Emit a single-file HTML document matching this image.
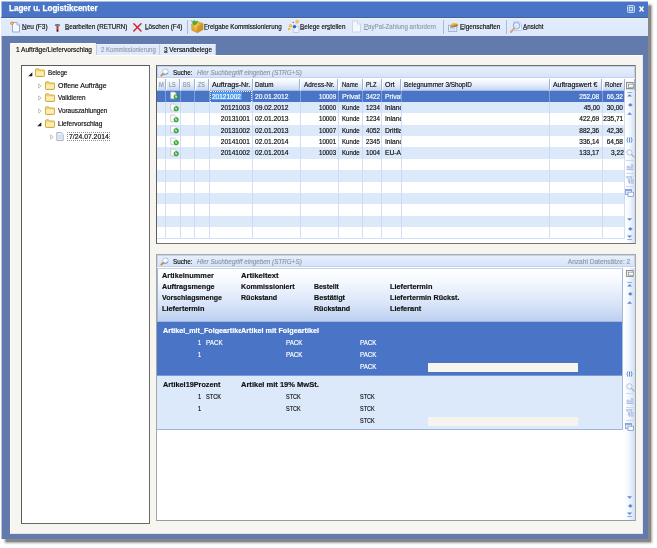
<!DOCTYPE html>
<html lang="de">
<head>
<meta charset="utf-8">
<title>Lager u. Logistikcenter</title>
<style>
html,body{margin:0;padding:0;background:#fff;}
body{width:657px;height:548px;position:relative;overflow:hidden;font-family:"Liberation Sans",sans-serif;font-size:7.3px;color:#0c0c0c;line-height:9px;}
.a{position:absolute;}
.t{position:absolute;white-space:nowrap;line-height:9px;-webkit-text-stroke:0.18px currentColor;}
#root{position:absolute;left:0;top:0;width:657px;height:548px;will-change:transform;filter:blur(0.35px);}
.g{color:#929baa;}
.w{color:#fff;}
u{text-decoration:underline;text-underline-offset:0.2px;text-decoration-thickness:0.7px;text-decoration-color:rgba(20,20,20,0.6);}
.g u{text-decoration-color:#929baa;}
svg{position:absolute;overflow:visible;}
#shadow{left:6px;top:6px;width:645px;height:536px;background:#878787;box-shadow:0 0 2.5px 1.2px #8b8b8b;}
#win{left:1px;top:1px;width:646px;height:537px;background:#627aac;border-left:1px solid #b3bfd8;border-top:1px solid #a7bbe3;}
#title{left:1px;top:2px;width:646px;height:15px;background:#4a74c6;border-left:1px solid #a7bbe3;}
#tline{left:1px;top:17px;width:647px;height:1px;background:#45609a;}
#tool{left:1px;top:18px;width:647px;height:18px;background:linear-gradient(#f1f6fe 0,#e1ecfc 1.5px,#dde9fb 100%);}
#content{left:10px;top:55px;width:633px;height:479px;background:#f6f5f0;border:1px solid #fdfdfc;border-right-color:#e4e8f0;border-bottom-color:#dfe3ec;box-sizing:border-box;}
.sep{position:absolute;top:20px;width:1px;height:14px;background:#a9b9d6;}
.panel{position:absolute;background:#fff;border:1px solid #9a9a9a;box-sizing:border-box;}
.search{position:absolute;background:linear-gradient(#e6effc,#d6e4f9);border:1px solid #c3d3ee;box-sizing:border-box;}
.hdr{position:absolute;background:linear-gradient(#ffffff,#e6eefb 50%,#c5d8f5);border-right:1px solid #9fb2d6;border-left:1px solid #fff;box-sizing:border-box;}
.strip{position:absolute;background:linear-gradient(90deg,#ffffff,#f4f8fe 45%,#cfdff7);}
</style>
</head>
<body>
<div id="root">
<div class="a" id="shadow"></div>
<div class="a" id="win"></div>
<div class="a" id="title"></div>
<div class="a" id="tline"></div>
<div class="a" id="tool"></div>
<div class="t w" style="top:4.35px;font-size:8.8px;transform:scaleX(0.915);left:9.4px;transform-origin:0 0;font-weight:bold;-webkit-text-stroke:0.25px #fff;">Lager u. Logistikcenter</div>
<svg style="left:627px;top:5px" width="24" height="10" viewBox="0 0 24 10"><rect x="0.5" y="0.5" width="7" height="7" rx="1" fill="#6f92d6" stroke="#c9d8f2" stroke-width="1"/><rect x="2.5" y="2.5" width="3" height="3" fill="none" stroke="#dfe8f8" stroke-width="0.8"/><path d="M12.5 1.5 L16.5 6.5 M16.5 1.5 L12.5 6.5" stroke="#fff" stroke-width="1.4" fill="none"/></svg>
<svg style="left:10px;top:21px" width="11" height="12" viewBox="0 0 11 12"><path d="M2.5 1.5 H7 L9.5 4 V11 H2.5 Z" fill="#f4f8ff" stroke="#8fa3c8" stroke-width="0.9"/><path d="M7 1.5 V4 H9.5" fill="#dbe6f8" stroke="#8fa3c8" stroke-width="0.7"/><circle cx="2" cy="2.2" r="1.7" fill="#f08a1c"/><circle cx="2" cy="2.2" r="0.7" fill="#ffd98a"/></svg>
<div class="t " style="top:21.76px;font-size:8px;transform:scaleX(0.811);left:21.9px;transform-origin:0 0;"><u>N</u>eu (F3)</div>
<svg style="left:54.3px;top:22.6px" width="7" height="9.6" viewBox="0 0 9 12"><path d="M1 2 Q4 0.3 8 2 L7.5 3.6 Q4.5 2.6 1.5 3.6 Z" fill="#5d6470"/><rect x="3.2" y="3" width="2.6" height="8" rx="1" fill="#b5442c"/><rect x="3.6" y="8.5" width="1.8" height="2.3" fill="#3a2a26"/></svg>
<div class="t " style="top:21.76px;font-size:8px;transform:scaleX(0.784);left:64.8px;transform-origin:0 0;"><u>B</u>earbeiten (RETURN)</div>
<svg style="left:133px;top:23px" width="9" height="9" viewBox="0 0 9 9"><path d="M0.8 0.8 L8 8 M8 0.8 L0.8 8" stroke="#d3262b" stroke-width="1.5" fill="none" stroke-linecap="round"/></svg>
<div class="t " style="top:21.76px;font-size:8px;transform:scaleX(0.791);left:144.7px;transform-origin:0 0;"><u>L</u>öschen (F4)</div>
<div class="sep" style="left:187px"></div>
<svg style="left:190px;top:19px" width="14" height="15" viewBox="0 0 14 15"><defs><radialGradient id="bx" cx="0.4" cy="0.35" r="0.75"><stop offset="0" stop-color="#f6c453"/><stop offset="0.7" stop-color="#e0a22c"/><stop offset="1" stop-color="#b97f1c"/></radialGradient></defs><path d="M1.6 5 L7.2 2.4 L13 4.6 L13 10.6 L7.4 13.8 L1.8 11.2 Z" fill="url(#bx)" stroke="#c08a25" stroke-width="0.5" stroke-linejoin="round"/><path d="M7.3 7.2 L13 4.8 V10.6 L7.4 13.8 Z" fill="#c88f22" opacity="0.75"/><path d="M0.3 1.2 L3 2.6 L4.2 0.8 L5.4 2.6 L8 1.4 L6.6 5.2 L3.6 6.6 L2.4 3.6 Z" fill="#43b02f"/></svg>
<div class="t " style="top:21.76px;font-size:8px;transform:scaleX(0.779);left:204px;transform-origin:0 0;"><u>F</u>reigabe Kommissionierung</div>
<svg style="left:287px;top:19px" width="14" height="15" viewBox="0 0 14 15"><rect x="6.2" y="7.8" width="5.8" height="5.8" fill="#eef1fb" stroke="#b9b6dc" stroke-width="0.7"/><path d="M3.5 6.8 L7.5 7.7 L10.2 2.5 M6.3 3.4 L7.5 7.7" stroke="#c9d2e6" stroke-width="0.5" fill="none"/><circle cx="10.2" cy="2.6" r="1.8" fill="#f0b429"/><circle cx="10" cy="2.3" r="0.8" fill="#fbe08e"/><circle cx="3.5" cy="6.8" r="1.7" fill="#f0b429"/><circle cx="3.3" cy="6.5" r="0.7" fill="#fbe08e"/><circle cx="2" cy="10.1" r="1.2" fill="#f0b429"/><circle cx="7.5" cy="7.7" r="1.6" fill="#2f5fd0"/><circle cx="6.3" cy="3.4" r="0.7" fill="#4f74c8"/></svg>
<div class="t " style="top:21.76px;font-size:8px;transform:scaleX(0.791);left:299.6px;transform-origin:0 0;"><u>B</u>elege er<u>s</u>tellen</div>
<svg style="left:351px;top:20px" width="11" height="13" viewBox="0 0 11 13"><path d="M1.5 1 H6.5 L9.5 4 V12 H1.5 Z" fill="#f3f7fe" stroke="#c3cfe4" stroke-width="0.8"/><path d="M6.5 1 V4 H9.5" fill="none" stroke="#c3cfe4" stroke-width="0.7"/></svg>
<div class="t g" style="top:21.76px;font-size:8px;transform:scaleX(0.770);left:363.5px;transform-origin:0 0;"><u>P</u>ayPal-Zahlung anfordern</div>
<div class="sep" style="left:443px"></div>
<svg style="left:448px;top:20px" width="12" height="13" viewBox="0 0 12 13"><rect x="0.4" y="5.2" width="8.4" height="6.2" fill="#f2f6fe" stroke="#8fa6d8" stroke-width="0.8"/><path d="M1.6 8.4 H7.6 M1.6 10 H7.6" stroke="#b4c4e6" stroke-width="0.8"/><path d="M2.6 6.2 Q3.2 3.6 6 3 Q8.6 2.6 10.4 4.6 Q8.4 6.6 5.6 6.6 Z" fill="#d99a1a"/><path d="M4 4.6 Q6 3.2 8.4 3.8" stroke="#f6d26a" stroke-width="0.8" fill="none"/><path d="M2 6.9 Q5 7.8 9.6 5.6" stroke="#5a3a14" stroke-width="0.8" fill="none"/></svg>
<div class="t " style="top:21.76px;font-size:8px;transform:scaleX(0.797);left:460.4px;transform-origin:0 0;"><u>E</u>igenschaften</div>
<div class="sep" style="left:506px"></div>
<svg style="left:509px;top:19px" width="14" height="15" viewBox="0 0 14 15"><path d="M4.8 2.8 H10 L12.4 5 V11.6 H4.8 Z" fill="#f4f8ff" stroke="#a7b9dc" stroke-width="0.7"/><circle cx="7.6" cy="6.8" r="3.3" fill="#d5e6fb" fill-opacity="0.9" stroke="#86a3d8" stroke-width="0.9"/><path d="M6.4 5.6 Q7.6 4.6 8.8 5.6" stroke="#fff" stroke-width="0.7" fill="none"/><path d="M5 9.6 L1.8 13" stroke="#d9a47c" stroke-width="2" stroke-linecap="round"/></svg>
<div class="t " style="top:21.76px;font-size:8px;transform:scaleX(0.781);left:523px;transform-origin:0 0;"><u>A</u>nsicht</div>
<div class="a" style="left:96px;top:44px;width:63.5px;height:11px;background:#dfeafb;border-left:1px solid #b9cbea;border-right:1px solid #b9cbea;border-top:1px solid #e9f1fd;box-sizing:border-box;"></div>
<div class="a" style="left:159.5px;top:44px;width:56px;height:11px;background:#dfeafb;border-right:1px solid #b9cbea;border-top:1px solid #e9f1fd;box-sizing:border-box;"></div>
<div class="t g" style="top:45.01px;font-size:7.6px;transform:scaleX(0.796);left:101px;transform-origin:0 0;">2 Kommissionierung</div>
<div class="t " style="top:45.01px;font-size:7.6px;transform:scaleX(0.841);left:164px;transform-origin:0 0;"><u>3</u> Versandbelege</div>
<div class="a" id="content"></div>
<div class="a" style="left:10px;top:43px;width:86px;height:14px;background:#f6f5f0;border-radius:1px 1px 0 0;border-top:1px solid #fdfdfb;box-sizing:border-box;"></div>
<div class="t " style="top:44.51px;font-size:7.6px;transform:scaleX(0.861);left:15.9px;transform-origin:0 0;">1 Aufträge/Liefervorschlag</div>
<div class="panel" style="left:21px;top:65px;width:129px;height:459px;border-color:#5a5a5a #6a6a6a #6a6a6a #5a5a5a"></div>
<svg style="left:27.6px;top:71.6px" width="4.6" height="4.6" viewBox="0 0 5 5"><path d="M4.7 0.2 V4.7 H0.2 Z" fill="#1e1e1e"/></svg>
<svg style="left:34.5px;top:68.3px" width="10" height="9" viewBox="0 0 11 9" preserveAspectRatio="none"><path d="M0.5 1.8 Q0.5 0.8 1.5 0.8 H4 L5 2 H9.5 Q10.5 2 10.5 3 V7.5 Q10.5 8.5 9.5 8.5 H1.5 Q0.5 8.5 0.5 7.5 Z" fill="#f4d672" stroke="#c49a28" stroke-width="0.8"/><path d="M1.2 3.4 H9.8 V7.6 H1.2 Z" fill="#fbeeb2"/></svg>
<div class="t " style="top:68.41px;font-size:7.6px;transform:scaleX(0.816);left:47.6px;transform-origin:0 0;">Belege</div>
<svg style="left:38px;top:82.7px" width="4" height="6" viewBox="0 0 5 7"><path d="M0.8 0.8 L4 3.5 L0.8 6.2 Z" fill="#fff" stroke="#a6a6a6" stroke-width="0.8"/></svg>
<svg style="left:45.2px;top:81.10000000000001px" width="10" height="9" viewBox="0 0 11 9" preserveAspectRatio="none"><path d="M0.5 1.8 Q0.5 0.8 1.5 0.8 H4 L5 2 H9.5 Q10.5 2 10.5 3 V7.5 Q10.5 8.5 9.5 8.5 H1.5 Q0.5 8.5 0.5 7.5 Z" fill="#f4d672" stroke="#c49a28" stroke-width="0.8"/><path d="M1.2 3.4 H9.8 V7.6 H1.2 Z" fill="#fbeeb2"/></svg>
<div class="t " style="top:81.11px;font-size:7.6px;transform:scaleX(0.915);left:57.7px;transform-origin:0 0;">Offene Aufträge</div>
<svg style="left:38px;top:94.7px" width="4" height="6" viewBox="0 0 5 7"><path d="M0.8 0.8 L4 3.5 L0.8 6.2 Z" fill="#fff" stroke="#a6a6a6" stroke-width="0.8"/></svg>
<svg style="left:45.2px;top:93.10000000000001px" width="10" height="9" viewBox="0 0 11 9" preserveAspectRatio="none"><path d="M0.5 1.8 Q0.5 0.8 1.5 0.8 H4 L5 2 H9.5 Q10.5 2 10.5 3 V7.5 Q10.5 8.5 9.5 8.5 H1.5 Q0.5 8.5 0.5 7.5 Z" fill="#f4d672" stroke="#c49a28" stroke-width="0.8"/><path d="M1.2 3.4 H9.8 V7.6 H1.2 Z" fill="#fbeeb2"/></svg>
<div class="t " style="top:93.11px;font-size:7.6px;transform:scaleX(0.830);left:57.7px;transform-origin:0 0;">Validieren</div>
<svg style="left:38px;top:108px" width="4" height="6" viewBox="0 0 5 7"><path d="M0.8 0.8 L4 3.5 L0.8 6.2 Z" fill="#fff" stroke="#a6a6a6" stroke-width="0.8"/></svg>
<svg style="left:45.2px;top:106.4px" width="10" height="9" viewBox="0 0 11 9" preserveAspectRatio="none"><path d="M0.5 1.8 Q0.5 0.8 1.5 0.8 H4 L5 2 H9.5 Q10.5 2 10.5 3 V7.5 Q10.5 8.5 9.5 8.5 H1.5 Q0.5 8.5 0.5 7.5 Z" fill="#f4d672" stroke="#c49a28" stroke-width="0.8"/><path d="M1.2 3.4 H9.8 V7.6 H1.2 Z" fill="#fbeeb2"/></svg>
<div class="t " style="top:106.41px;font-size:7.6px;transform:scaleX(0.841);left:57.7px;transform-origin:0 0;">Vorauszahlungen</div>
<svg style="left:37.3px;top:122px" width="4.6" height="4.6" viewBox="0 0 5 5"><path d="M4.7 0.2 V4.7 H0.2 Z" fill="#1e1e1e"/></svg>
<svg style="left:45.2px;top:119px" width="10" height="9" viewBox="0 0 11 9" preserveAspectRatio="none"><path d="M0.5 1.8 Q0.5 0.8 1.5 0.8 H4 L5 2 H9.5 Q10.5 2 10.5 3 V7.5 Q10.5 8.5 9.5 8.5 H1.5 Q0.5 8.5 0.5 7.5 Z" fill="#f4d672" stroke="#c49a28" stroke-width="0.8"/><path d="M1.2 3.4 H9.8 V7.6 H1.2 Z" fill="#fbeeb2"/></svg>
<div class="t " style="top:119.01px;font-size:7.6px;transform:scaleX(0.861);left:57.7px;transform-origin:0 0;">Liefervorschlag</div>
<svg style="left:49.5px;top:133.5px" width="4" height="6" viewBox="0 0 5 7"><path d="M0.8 0.8 L4 3.5 L0.8 6.2 Z" fill="#fff" stroke="#a6a6a6" stroke-width="0.8"/></svg>
<svg style="left:56px;top:132px" width="8" height="9" viewBox="0 0 8 10" preserveAspectRatio="none"><path d="M0.8 0.6 H5 L7.2 2.8 V9.4 H0.8 Z" fill="#eef3fc" stroke="#8c9dbd" stroke-width="0.8"/><path d="M2 4 H6 M2 5.5 H6 M2 7 H6" stroke="#b9c6df" stroke-width="0.6"/></svg>
<div class="a" style="left:66.7px;top:131.5px;width:43px;height:9.3px;background:transparent;border:1px dotted #8a8a8a;box-sizing:border-box;"></div>
<div class="t " style="top:131.61px;font-size:7.6px;transform:scaleX(0.897);left:68.6px;transform-origin:0 0;">7/24.07.2014</div>
<div class="panel" style="left:156px;top:65px;width:480px;height:179px;border-color:#707070 #9a9a9a #727272 #5e5e5e"></div>
<div class="search" style="left:157px;top:66px;width:478px;height:12.4px"></div>
<svg style="left:160px;top:68px" width="9" height="9" viewBox="0 0 9 9"><circle cx="5.5" cy="3.7" r="2.8" fill="#eefaff" stroke="#9fb6d8" stroke-width="0.8"/><path d="M3.6 5.9 Q5.8 7.2 7.9 5" stroke="#5f7fb4" stroke-width="0.8" fill="none"/><circle cx="5" cy="3.1" r="1.3" fill="#ffffff"/><path d="M3.1 6 L1.3 7.7" stroke="#c98845" stroke-width="1.8" stroke-linecap="round"/></svg>
<div class="t " style="top:67.61px;font-size:7.6px;transform:scaleX(0.824);left:173px;transform-origin:0 0;">Suche:</div>
<div class="t " style="top:67.61px;font-size:7.6px;transform:scaleX(0.835);left:197.4px;transform-origin:0 0;font-style:italic;color:#8f97a6;">Hier Suchbegriff eingeben (STRG+S)</div>
<div class="hdr" style="left:157px;top:79px;width:8.6px;height:11.4px"></div>
<div class="hdr" style="left:165.6px;top:79px;width:14.7px;height:11.4px"></div>
<div class="hdr" style="left:180.3px;top:79px;width:14.6px;height:11.4px"></div>
<div class="hdr" style="left:194.9px;top:79px;width:14.1px;height:11.4px"></div>
<div class="hdr" style="left:209px;top:79px;width:43.9px;height:11.4px"></div>
<div class="hdr" style="left:252.9px;top:79px;width:47.4px;height:11.4px"></div>
<div class="hdr" style="left:300.3px;top:79px;width:38.2px;height:11.4px"></div>
<div class="hdr" style="left:338.5px;top:79px;width:24.3px;height:11.4px"></div>
<div class="hdr" style="left:362.8px;top:79px;width:18.8px;height:11.4px"></div>
<div class="hdr" style="left:381.6px;top:79px;width:19.6px;height:11.4px"></div>
<div class="hdr" style="left:401.2px;top:79px;width:148.4px;height:11.4px"></div>
<div class="hdr" style="left:549.6px;top:79px;width:52.7px;height:11.4px"></div>
<div class="hdr" style="left:602.3px;top:79px;width:22.5px;height:11.4px"></div>
<div class="hdr" style="left:624.8px;top:79px;width:10.2px;height:11.4px"></div>
<div class="a" style="left:157px;top:89.8px;width:478px;height:0.8px;background:#a9bbdc;"></div>
<div class="t " style="top:80.11px;font-size:7.6px;transform:scaleX(0.758);left:159.4px;transform-origin:0 0;color:#8e96a4;">M</div>
<div class="t " style="top:80.11px;font-size:7.6px;transform:scaleX(0.710);left:168.6px;transform-origin:0 0;color:#8e96a4;">LS</div>
<div class="t " style="top:80.11px;font-size:7.6px;transform:scaleX(0.720);left:183.3px;transform-origin:0 0;color:#8e96a4;">BS</div>
<div class="t " style="top:80.11px;font-size:7.6px;transform:scaleX(0.700);left:197.9px;transform-origin:0 0;color:#8e96a4;">ZS</div>
<div class="t " style="top:80.11px;font-size:7.6px;transform:scaleX(0.945);left:212px;transform-origin:0 0;">Auftrags-Nr.</div>
<div class="t " style="top:80.11px;font-size:7.6px;transform:scaleX(0.826);left:255.3px;transform-origin:0 0;">Datum</div>
<div class="t " style="top:80.11px;font-size:7.6px;transform:scaleX(0.855);left:303.5px;transform-origin:0 0;">Adress-Nr.</div>
<div class="t " style="top:80.11px;font-size:7.6px;transform:scaleX(0.789);left:341.6px;transform-origin:0 0;">Name</div>
<div class="t " style="top:80.11px;font-size:7.6px;transform:scaleX(0.753);left:365.5px;transform-origin:0 0;">PLZ</div>
<div class="t " style="top:80.11px;font-size:7.6px;transform:scaleX(0.919);left:384.8px;transform-origin:0 0;">Ort</div>
<div class="t " style="top:80.11px;font-size:7.6px;transform:scaleX(0.838);left:403.5px;transform-origin:0 0;">Belegnummer 3/ShopID</div>
<div class="t " style="top:80.11px;font-size:7.6px;transform:scaleX(0.908);left:552.5px;transform-origin:0 0;">Auftragswert €</div>
<div class="t " style="top:80.11px;font-size:7.6px;transform:scaleX(0.821);left:604.5px;transform-origin:0 0;">Roher</div>
<div class="a" style="left:157px;top:90.5px;width:467.7px;height:11.38px;background:#4a74c6;"></div>
<div class="a" style="left:157px;top:101.88px;width:467.7px;height:11.38px;background:#dce9fb;"></div>
<div class="a" style="left:157px;top:124.64px;width:467.7px;height:11.38px;background:#dce9fb;"></div>
<div class="a" style="left:157px;top:147.4px;width:467.7px;height:11.38px;background:#dce9fb;"></div>
<div class="a" style="left:157px;top:170.16px;width:467.7px;height:11.38px;background:#dce9fb;"></div>
<div class="a" style="left:157px;top:192.92px;width:467.7px;height:11.38px;background:#dce9fb;"></div>
<div class="a" style="left:157px;top:215.68px;width:467.7px;height:11.38px;background:#dce9fb;"></div>
<div class="a" style="left:165.1px;top:90.4px;width:1px;height:148.04px;background:#c9d8f2;opacity:0.85;"></div>
<div class="a" style="left:179.8px;top:90.4px;width:1px;height:148.04px;background:#c9d8f2;opacity:0.85;"></div>
<div class="a" style="left:194.4px;top:90.4px;width:1px;height:148.04px;background:#c9d8f2;opacity:0.85;"></div>
<div class="a" style="left:208.5px;top:90.4px;width:1px;height:148.04px;background:#c9d8f2;opacity:0.85;"></div>
<div class="a" style="left:252.4px;top:90.4px;width:1px;height:148.04px;background:#c9d8f2;opacity:0.85;"></div>
<div class="a" style="left:299.8px;top:90.4px;width:1px;height:148.04px;background:#c9d8f2;opacity:0.85;"></div>
<div class="a" style="left:338px;top:90.4px;width:1px;height:148.04px;background:#c9d8f2;opacity:0.85;"></div>
<div class="a" style="left:362.3px;top:90.4px;width:1px;height:148.04px;background:#c9d8f2;opacity:0.85;"></div>
<div class="a" style="left:381.1px;top:90.4px;width:1px;height:148.04px;background:#c9d8f2;opacity:0.85;"></div>
<div class="a" style="left:400.7px;top:90.4px;width:1px;height:148.04px;background:#c9d8f2;opacity:0.85;"></div>
<div class="a" style="left:549.1px;top:90.4px;width:1px;height:148.04px;background:#c9d8f2;opacity:0.85;"></div>
<div class="a" style="left:601.8px;top:90.4px;width:1px;height:148.04px;background:#c9d8f2;opacity:0.85;"></div>
<div class="a" style="left:624.3px;top:90.4px;width:1px;height:148.04px;background:#c9d8f2;opacity:0.85;"></div>
<div class="a" style="left:165.1px;top:90.5px;width:1px;height:11.38px;background:#7f9fdc;"></div>
<div class="a" style="left:179.8px;top:90.5px;width:1px;height:11.38px;background:#7f9fdc;"></div>
<div class="a" style="left:194.4px;top:90.5px;width:1px;height:11.38px;background:#7f9fdc;"></div>
<div class="a" style="left:208.5px;top:90.5px;width:1px;height:11.38px;background:#7f9fdc;"></div>
<div class="a" style="left:252.4px;top:90.5px;width:1px;height:11.38px;background:#7f9fdc;"></div>
<div class="a" style="left:299.8px;top:90.5px;width:1px;height:11.38px;background:#7f9fdc;"></div>
<div class="a" style="left:338px;top:90.5px;width:1px;height:11.38px;background:#7f9fdc;"></div>
<div class="a" style="left:362.3px;top:90.5px;width:1px;height:11.38px;background:#7f9fdc;"></div>
<div class="a" style="left:381.1px;top:90.5px;width:1px;height:11.38px;background:#7f9fdc;"></div>
<div class="a" style="left:400.7px;top:90.5px;width:1px;height:11.38px;background:#7f9fdc;"></div>
<div class="a" style="left:549.1px;top:90.5px;width:1px;height:11.38px;background:#7f9fdc;"></div>
<div class="a" style="left:601.8px;top:90.5px;width:1px;height:11.38px;background:#7f9fdc;"></div>
<div class="a" style="left:157px;top:238.14px;width:468px;height:0.9px;background:#d3e1f6;"></div>
<div class="strip" style="left:625.2px;top:90.4px;width:9.8px;height:152.6px"></div>
<div class="a" style="left:209.5px;top:90.8px;width:42.5px;height:10.78px;background:transparent;border:1px dotted #e8eefb;border-bottom:none;box-sizing:border-box;"></div>
<div class="a" style="left:211.5px;top:92.1px;width:30px;height:8.38px;background:#4f9bea;"></div>
<svg style="left:169.7px;top:91.3px" width="9" height="10" viewBox="0 0 9 10"><path d="M0.7 1 H4.6 L6.2 2.6 V7.8 H0.7 Z" fill="#fdfefe" stroke="#b4b9c4" stroke-width="0.7"/><circle cx="6.2" cy="5.7" r="2.3" fill="#35b032" stroke="#1f8a22" stroke-width="0.5"/><circle cx="5.7" cy="5" r="0.9" fill="#9be38f" opacity="0.8"/><path d="M5.1 5.6 H7.3 L6.2 7 Z" fill="#f2fff0"/></svg>
<div class="t " style="top:91.5px;font-size:7.6px;transform:scaleX(0.858);left:212px;transform-origin:0 0;color:#fff;">20121002</div>
<div class="t " style="top:91.5px;font-size:7.6px;transform:scaleX(0.881);left:255.3px;transform-origin:0 0;color:#fff;">20.01.2012</div>
<div class="t " style="top:91.5px;font-size:7.6px;transform:scaleX(0.809);right:320.8px;transform-origin:100% 0;color:#fff;">10009</div>
<div class="a" style="left:339px;top:90.5px;width:23.3px;height:11.38px;overflow:hidden">
<div class="t " style="top:1px;font-size:7.6px;transform:scaleX(0.940);left:2.6px;transform-origin:0 0;color:#fff;">Privat K</div>
</div>
<div class="t " style="top:91.5px;font-size:7.6px;transform:scaleX(0.816);right:277.2px;transform-origin:100% 0;color:#fff;">3422</div>
<div class="a" style="left:382.1px;top:90.5px;width:18.6px;height:11.38px;overflow:hidden">
<div class="t " style="top:1px;font-size:7.6px;transform:scaleX(0.888);left:2.7px;transform-origin:0 0;color:#fff;">Privat</div>
</div>
<div class="t " style="top:91.5px;font-size:7.6px;transform:scaleX(0.860);right:57.4px;transform-origin:100% 0;color:#fff;">252,08</div>
<div class="t " style="top:91.5px;font-size:7.6px;transform:scaleX(0.861);right:33.5px;transform-origin:100% 0;color:#fff;">66,32</div>
<svg style="left:169.7px;top:102.68px" width="9" height="10" viewBox="0 0 9 10"><path d="M0.7 1 H4.6 L6.2 2.6 V7.8 H0.7 Z" fill="#fdfefe" stroke="#b4b9c4" stroke-width="0.7"/><circle cx="6.2" cy="5.7" r="2.3" fill="#35b032" stroke="#1f8a22" stroke-width="0.5"/><circle cx="5.7" cy="5" r="0.9" fill="#9be38f" opacity="0.8"/><path d="M5.1 5.6 H7.3 L6.2 7 Z" fill="#f2fff0"/></svg>
<div class="t " style="top:102.88px;font-size:7.6px;transform:scaleX(0.858);right:407.3px;transform-origin:100% 0;">20121003</div>
<div class="t " style="top:102.88px;font-size:7.6px;transform:scaleX(0.881);left:255.3px;transform-origin:0 0;">09.02.2012</div>
<div class="t " style="top:102.88px;font-size:7.6px;transform:scaleX(0.809);right:320.8px;transform-origin:100% 0;">10000</div>
<div class="a" style="left:339px;top:101.88px;width:23.3px;height:11.38px;overflow:hidden">
<div class="t " style="top:1px;font-size:7.6px;transform:scaleX(0.805);left:2.6px;transform-origin:0 0;">Kunde</div>
</div>
<div class="t " style="top:102.88px;font-size:7.6px;transform:scaleX(0.816);right:277.2px;transform-origin:100% 0;">1234</div>
<div class="a" style="left:382.1px;top:101.88px;width:18.6px;height:11.38px;overflow:hidden">
<div class="t " style="top:1px;font-size:7.6px;transform:scaleX(0.888);left:2.7px;transform-origin:0 0;">Inland</div>
</div>
<div class="t " style="top:102.88px;font-size:7.6px;transform:scaleX(0.861);right:57.4px;transform-origin:100% 0;">45,00</div>
<div class="t " style="top:102.88px;font-size:7.6px;transform:scaleX(0.861);right:33.5px;transform-origin:100% 0;">30,00</div>
<svg style="left:169.7px;top:114.06px" width="9" height="10" viewBox="0 0 9 10"><path d="M0.7 1 H4.6 L6.2 2.6 V7.8 H0.7 Z" fill="#fdfefe" stroke="#b4b9c4" stroke-width="0.7"/><circle cx="6.2" cy="5.7" r="2.3" fill="#35b032" stroke="#1f8a22" stroke-width="0.5"/><circle cx="5.7" cy="5" r="0.9" fill="#9be38f" opacity="0.8"/><path d="M5.1 5.6 H7.3 L6.2 7 Z" fill="#f2fff0"/></svg>
<div class="t " style="top:114.26px;font-size:7.6px;transform:scaleX(0.858);right:407.3px;transform-origin:100% 0;">20131001</div>
<div class="t " style="top:114.26px;font-size:7.6px;transform:scaleX(0.881);left:255.3px;transform-origin:0 0;">02.01.2013</div>
<div class="t " style="top:114.26px;font-size:7.6px;transform:scaleX(0.809);right:320.8px;transform-origin:100% 0;">10000</div>
<div class="a" style="left:339px;top:113.26px;width:23.3px;height:11.38px;overflow:hidden">
<div class="t " style="top:1px;font-size:7.6px;transform:scaleX(0.805);left:2.6px;transform-origin:0 0;">Kunde</div>
</div>
<div class="t " style="top:114.26px;font-size:7.6px;transform:scaleX(0.816);right:277.2px;transform-origin:100% 0;">1234</div>
<div class="a" style="left:382.1px;top:113.26px;width:18.6px;height:11.38px;overflow:hidden">
<div class="t " style="top:1px;font-size:7.6px;transform:scaleX(0.888);left:2.7px;transform-origin:0 0;">Inland</div>
</div>
<div class="t " style="top:114.26px;font-size:7.6px;transform:scaleX(0.860);right:57.4px;transform-origin:100% 0;">422,69</div>
<div class="t " style="top:114.26px;font-size:7.6px;transform:scaleX(0.860);right:33.5px;transform-origin:100% 0;">235,71</div>
<svg style="left:169.7px;top:125.44px" width="9" height="10" viewBox="0 0 9 10"><path d="M0.7 1 H4.6 L6.2 2.6 V7.8 H0.7 Z" fill="#fdfefe" stroke="#b4b9c4" stroke-width="0.7"/><circle cx="6.2" cy="5.7" r="2.3" fill="#35b032" stroke="#1f8a22" stroke-width="0.5"/><circle cx="5.7" cy="5" r="0.9" fill="#9be38f" opacity="0.8"/><path d="M5.1 5.6 H7.3 L6.2 7 Z" fill="#f2fff0"/></svg>
<div class="t " style="top:125.64px;font-size:7.6px;transform:scaleX(0.858);right:407.3px;transform-origin:100% 0;">20131002</div>
<div class="t " style="top:125.64px;font-size:7.6px;transform:scaleX(0.881);left:255.3px;transform-origin:0 0;">02.01.2013</div>
<div class="t " style="top:125.64px;font-size:7.6px;transform:scaleX(0.809);right:320.8px;transform-origin:100% 0;">10007</div>
<div class="a" style="left:339px;top:124.64px;width:23.3px;height:11.38px;overflow:hidden">
<div class="t " style="top:1px;font-size:7.6px;transform:scaleX(0.805);left:2.6px;transform-origin:0 0;">Kunde</div>
</div>
<div class="t " style="top:125.64px;font-size:7.6px;transform:scaleX(0.816);right:277.2px;transform-origin:100% 0;">4052</div>
<div class="a" style="left:382.1px;top:124.64px;width:18.6px;height:11.38px;overflow:hidden">
<div class="t " style="top:1px;font-size:7.6px;transform:scaleX(0.888);left:2.7px;transform-origin:0 0;">Drittland</div>
</div>
<div class="t " style="top:125.64px;font-size:7.6px;transform:scaleX(0.860);right:57.4px;transform-origin:100% 0;">882,36</div>
<div class="t " style="top:125.64px;font-size:7.6px;transform:scaleX(0.861);right:33.5px;transform-origin:100% 0;">42,36</div>
<svg style="left:169.7px;top:136.82px" width="9" height="10" viewBox="0 0 9 10"><path d="M0.7 1 H4.6 L6.2 2.6 V7.8 H0.7 Z" fill="#fdfefe" stroke="#b4b9c4" stroke-width="0.7"/><circle cx="6.2" cy="5.7" r="2.3" fill="#35b032" stroke="#1f8a22" stroke-width="0.5"/><circle cx="5.7" cy="5" r="0.9" fill="#9be38f" opacity="0.8"/><path d="M5.1 5.6 H7.3 L6.2 7 Z" fill="#f2fff0"/></svg>
<div class="t " style="top:137.02px;font-size:7.6px;transform:scaleX(0.858);right:407.3px;transform-origin:100% 0;">20141001</div>
<div class="t " style="top:137.02px;font-size:7.6px;transform:scaleX(0.881);left:255.3px;transform-origin:0 0;">02.01.2014</div>
<div class="t " style="top:137.02px;font-size:7.6px;transform:scaleX(0.809);right:320.8px;transform-origin:100% 0;">10001</div>
<div class="a" style="left:339px;top:136.02px;width:23.3px;height:11.38px;overflow:hidden">
<div class="t " style="top:1px;font-size:7.6px;transform:scaleX(0.805);left:2.6px;transform-origin:0 0;">Kunde</div>
</div>
<div class="t " style="top:137.02px;font-size:7.6px;transform:scaleX(0.816);right:277.2px;transform-origin:100% 0;">2345</div>
<div class="a" style="left:382.1px;top:136.02px;width:18.6px;height:11.38px;overflow:hidden">
<div class="t " style="top:1px;font-size:7.6px;transform:scaleX(0.888);left:2.7px;transform-origin:0 0;">Inland</div>
</div>
<div class="t " style="top:137.02px;font-size:7.6px;transform:scaleX(0.860);right:57.4px;transform-origin:100% 0;">336,14</div>
<div class="t " style="top:137.02px;font-size:7.6px;transform:scaleX(0.861);right:33.5px;transform-origin:100% 0;">64,58</div>
<svg style="left:169.7px;top:148.2px" width="9" height="10" viewBox="0 0 9 10"><path d="M0.7 1 H4.6 L6.2 2.6 V7.8 H0.7 Z" fill="#fdfefe" stroke="#b4b9c4" stroke-width="0.7"/><circle cx="6.2" cy="5.7" r="2.3" fill="#35b032" stroke="#1f8a22" stroke-width="0.5"/><circle cx="5.7" cy="5" r="0.9" fill="#9be38f" opacity="0.8"/><path d="M5.1 5.6 H7.3 L6.2 7 Z" fill="#f2fff0"/></svg>
<div class="t " style="top:148.4px;font-size:7.6px;transform:scaleX(0.858);right:407.3px;transform-origin:100% 0;">20141002</div>
<div class="t " style="top:148.4px;font-size:7.6px;transform:scaleX(0.881);left:255.3px;transform-origin:0 0;">02.01.2014</div>
<div class="t " style="top:148.4px;font-size:7.6px;transform:scaleX(0.809);right:320.8px;transform-origin:100% 0;">10003</div>
<div class="a" style="left:339px;top:147.4px;width:23.3px;height:11.38px;overflow:hidden">
<div class="t " style="top:1px;font-size:7.6px;transform:scaleX(0.805);left:2.6px;transform-origin:0 0;">Kunde</div>
</div>
<div class="t " style="top:148.4px;font-size:7.6px;transform:scaleX(0.816);right:277.2px;transform-origin:100% 0;">1004</div>
<div class="a" style="left:382.1px;top:147.4px;width:18.6px;height:11.38px;overflow:hidden">
<div class="t " style="top:1px;font-size:7.6px;transform:scaleX(0.888);left:2.7px;transform-origin:0 0;">EU-Ausland</div>
</div>
<div class="t " style="top:148.4px;font-size:7.6px;transform:scaleX(0.860);right:57.4px;transform-origin:100% 0;">133,17</div>
<div class="t " style="top:148.4px;font-size:7.6px;transform:scaleX(0.863);right:33.5px;transform-origin:100% 0;">3,22</div>
<svg style="left:626px;top:81.5px" width="8" height="7" viewBox="0 0 8 7"><rect x="0.5" y="0.5" width="6.6" height="6" fill="#eeeeea" stroke="#8a8a86" stroke-width="0.9"/><rect x="2.4" y="2.2" width="5.2" height="3" fill="#fff" stroke="#8a8a86" stroke-width="0.7"/></svg>
<svg style="left:627.3px;top:92.3px" width="5.2" height="5" viewBox="0 0 5.2 5"><rect x="0.3" y="0" width="4.6" height="0.9" fill="#5f87d2" opacity="0.75"/><path d="M0.1 4.6 L2.6 2 L5.1 4.6 Z" fill="#5f87d2"/></svg>
<svg style="left:627.6px;top:102.8px" width="4.6" height="3.8" viewBox="0 0 4.6 3.8"><path d="M2.3 0 L4.6 1.9 L2.3 3.8 L0 1.9 Z" fill="#5f87d2"/></svg>
<svg style="left:627.3px;top:112.2px" width="5.2" height="3" viewBox="0 0 5.2 3"><path d="M0.1 2.8 L2.6 0.2 L5.1 2.8 Z" fill="#5f87d2"/></svg>
<svg style="left:626.4px;top:137.2px" width="7" height="6" viewBox="0 0 7 6"><path d="M1.8 0.3 Q0.2 3 1.8 5.7 M5.2 0.3 Q6.8 3 5.2 5.7" stroke="#5f87d2" stroke-width="0.9" fill="none"/><rect x="3" y="0.6" width="1" height="4.8" fill="#5f87d2"/></svg>
<svg style="left:625.9px;top:149px" width="9" height="9" viewBox="0 0 9 9"><circle cx="3.4" cy="3.4" r="2.7" fill="#f3f7fd" stroke="#a9bcdf" stroke-width="0.9"/><path d="M5.6 5.6 L8 8" stroke="#a3b7dd" stroke-width="1.4" stroke-linecap="round"/></svg>
<div class="a" style="left:625.9px;top:159.8px;width:8px;height:0.8px;background:#c9d7f0;"></div>
<svg style="left:625.9px;top:163.3px" width="8" height="7" viewBox="0 0 8 7"><path d="M0.5 6.5 H7.5" stroke="#a3b7dd" stroke-width="0.9"/><path d="M1 5.6 V3 H2.8 V5.6 M3.4 5.6 V4 H4.6 V5.6 M5.2 5.6 V1.5 H7 V5.6" fill="#c3d3ee" stroke="#a3b7dd" stroke-width="0.5"/></svg>
<div class="a" style="left:625.9px;top:173.4px;width:8px;height:0.8px;background:#c9d7f0;"></div>
<svg style="left:625.9px;top:176px" width="8" height="8" viewBox="0 0 8 8"><path d="M0.3 0.8 H6.2 L3.8 3.6 V7.4 L2.7 6.5 V3.6 Z" fill="#dfe8f8" stroke="#8fa8d6" stroke-width="0.7"/><rect x="5.2" y="3.6" width="2.3" height="3.8" fill="#c3d3ee" stroke="#a3b7dd" stroke-width="0.5"/></svg>
<div class="a" style="left:625.9px;top:186.4px;width:8px;height:0.8px;background:#c9d7f0;"></div>
<svg style="left:625.4px;top:189.2px" width="9" height="8" viewBox="0 0 9 8"><rect x="0.5" y="0.5" width="6" height="5" fill="#e4ecf9" stroke="#7f9bd0" stroke-width="0.8"/><rect x="0.5" y="0.5" width="6" height="1.3" fill="#7f9bd0"/><rect x="3" y="3.2" width="5.4" height="4.2" fill="#f8fbff" stroke="#7f9bd0" stroke-width="0.8"/></svg>
<svg style="left:627.3px;top:218.3px" width="5.2" height="3" viewBox="0 0 5.2 3"><path d="M0.1 0.2 L2.6 2.8 L5.1 0.2 Z" fill="#5f87d2"/></svg>
<svg style="left:627.6px;top:226.6px" width="4.6" height="3.8" viewBox="0 0 4.6 3.8"><path d="M2.3 0 L4.6 1.9 L2.3 3.8 L0 1.9 Z" fill="#5f87d2"/></svg>
<svg style="left:627.3px;top:235.3px" width="5.2" height="5" viewBox="0 0 5.2 5"><rect x="0.3" y="4.1" width="4.6" height="0.9" fill="#5f87d2" opacity="0.75"/><path d="M0.1 0.4 L2.6 3 L5.1 0.4 Z" fill="#5f87d2"/></svg>
<div class="panel" style="left:156px;top:254px;width:480px;height:267px;border-color:#ababab #a8a8a8 #9c9c9c #a6a6a6"></div>
<div class="search" style="left:157px;top:255px;width:478px;height:12.4px"></div>
<svg style="left:160px;top:257px" width="9" height="9" viewBox="0 0 9 9"><circle cx="5.5" cy="3.7" r="2.8" fill="#eefaff" stroke="#9fb6d8" stroke-width="0.8"/><path d="M3.6 5.9 Q5.8 7.2 7.9 5" stroke="#5f7fb4" stroke-width="0.8" fill="none"/><circle cx="5" cy="3.1" r="1.3" fill="#ffffff"/><path d="M3.1 6 L1.3 7.7" stroke="#c98845" stroke-width="1.8" stroke-linecap="round"/></svg>
<div class="t " style="top:256.71px;font-size:7.6px;transform:scaleX(0.824);left:173px;transform-origin:0 0;">Suche:</div>
<div class="t " style="top:256.71px;font-size:7.6px;transform:scaleX(0.835);left:197.4px;transform-origin:0 0;font-style:italic;color:#8f97a6;">Hier Suchbegriff eingeben (STRG+S)</div>
<div class="t " style="top:256.71px;font-size:7.6px;transform:scaleX(0.864);right:26.6px;transform-origin:100% 0;color:#8f97a6;">Anzahl Datensätze: 2</div>
<div class="a" style="left:157px;top:268px;width:466px;height:54px;background:linear-gradient(#ffffff,#f4f8fe 25%,#d6e3f8 70%,#bcd0f1);border:1px solid #a3b6d8;border-top-color:#c5d3ea;box-sizing:border-box"></div>
<div class="t " style="top:271.47px;font-size:7.5px;transform:scaleX(0.979);left:162px;transform-origin:0 0;font-weight:bold;color:#111;">Artikelnummer</div>
<div class="t " style="top:282.27px;font-size:7.5px;transform:scaleX(0.956);left:162px;transform-origin:0 0;font-weight:bold;color:#111;">Auftragsmenge</div>
<div class="t " style="top:293.17px;font-size:7.5px;transform:scaleX(0.937);left:162px;transform-origin:0 0;font-weight:bold;color:#111;">Vorschlagsmenge</div>
<div class="t " style="top:303.87px;font-size:7.5px;transform:scaleX(0.978);left:162px;transform-origin:0 0;font-weight:bold;color:#111;">Liefertermin</div>
<div class="t " style="top:271.47px;font-size:7.5px;transform:scaleX(1.025);left:241.2px;transform-origin:0 0;font-weight:bold;color:#111;">Artikeltext</div>
<div class="t " style="top:282.27px;font-size:7.5px;transform:scaleX(0.947);left:241.2px;transform-origin:0 0;font-weight:bold;color:#111;">Kommissioniert</div>
<div class="t " style="top:293.17px;font-size:7.5px;transform:scaleX(0.944);left:241.2px;transform-origin:0 0;font-weight:bold;color:#111;">Rückstand</div>
<div class="t " style="top:282.27px;font-size:7.5px;transform:scaleX(0.919);left:314px;transform-origin:0 0;font-weight:bold;color:#111;">Bestellt</div>
<div class="t " style="top:293.17px;font-size:7.5px;transform:scaleX(0.966);left:314px;transform-origin:0 0;font-weight:bold;color:#111;">Bestätigt</div>
<div class="t " style="top:303.87px;font-size:7.5px;transform:scaleX(0.944);left:314px;transform-origin:0 0;font-weight:bold;color:#111;">Rückstand</div>
<div class="t " style="top:282.27px;font-size:7.5px;transform:scaleX(0.978);left:389.6px;transform-origin:0 0;font-weight:bold;color:#111;">Liefertermin</div>
<div class="t " style="top:293.17px;font-size:7.5px;transform:scaleX(0.957);left:389.6px;transform-origin:0 0;font-weight:bold;color:#111;">Liefertermin Rückst.</div>
<div class="t " style="top:303.87px;font-size:7.5px;transform:scaleX(0.982);left:389.6px;transform-origin:0 0;font-weight:bold;color:#111;">Lieferant</div>
<div class="strip" style="left:623px;top:268px;width:12px;height:252px"></div>
<div class="a" style="left:157px;top:322px;width:465px;height:53px;background:#4a74c6;"></div>
<div class="a" style="left:158px;top:322px;width:83px;height:12px;overflow:hidden">
<div class="t " style="top:3.97px;font-size:7.5px;transform:scaleX(0.954);left:5px;transform-origin:0 0;font-weight:bold;color:#fff;">Artikel_mit_Folgeartikel</div>
</div>
<div class="t " style="top:325.97px;font-size:7.5px;transform:scaleX(0.965);left:241.2px;transform-origin:0 0;font-weight:bold;color:#fff;">Artikel mit Folgeartikel</div>
<div class="t " style="top:337.51px;font-size:7.6px;transform:scaleX(0.757);right:455.6px;transform-origin:100% 0;color:#fff;">1</div>
<div class="t " style="top:337.51px;font-size:7.6px;transform:scaleX(0.834);left:205.8px;transform-origin:0 0;color:#fff;">PACK</div>
<div class="t " style="top:349.51px;font-size:7.6px;transform:scaleX(0.757);right:455.6px;transform-origin:100% 0;color:#fff;">1</div>
<div class="t " style="top:338.21px;font-size:7.6px;transform:scaleX(0.815);left:285.7px;transform-origin:0 0;color:#fff;">PACK</div>
<div class="t " style="top:350.01px;font-size:7.6px;transform:scaleX(0.815);left:285.7px;transform-origin:0 0;color:#fff;">PACK</div>
<div class="t " style="top:338.21px;font-size:7.6px;transform:scaleX(0.815);left:359.8px;transform-origin:0 0;color:#fff;">PACK</div>
<div class="t " style="top:350.01px;font-size:7.6px;transform:scaleX(0.815);left:359.8px;transform-origin:0 0;color:#fff;">PACK</div>
<div class="t " style="top:361.71px;font-size:7.6px;transform:scaleX(0.815);left:359.8px;transform-origin:0 0;color:#fff;">PACK</div>
<div class="a" style="left:427.5px;top:363.2px;width:150.3px;height:8.8px;background:#f6f5f0;"></div>
<div class="a" style="left:157px;top:375.3px;width:465px;height:1.5px;background:#7f9ad4;"></div>
<div class="a" style="left:157px;top:376.2px;width:465px;height:53.1px;background:#dce9fb;"></div>
<div class="a" style="left:158px;top:376.2px;width:83px;height:12px;overflow:hidden">
<div class="t " style="top:3.97px;font-size:7.5px;transform:scaleX(0.970);left:5px;transform-origin:0 0;font-weight:bold;color:#111;">Artikel19Prozent</div>
</div>
<div class="t " style="top:380.17px;font-size:7.5px;transform:scaleX(1.004);left:241.2px;transform-origin:0 0;font-weight:bold;color:#111;">Artikel mit 19% MwSt.</div>
<div class="t " style="top:391.71px;font-size:7.6px;transform:scaleX(0.757);right:455.6px;transform-origin:100% 0;color:#111;">1</div>
<div class="t " style="top:391.71px;font-size:7.6px;transform:scaleX(0.740);left:205.8px;transform-origin:0 0;color:#111;">STCK</div>
<div class="t " style="top:403.71px;font-size:7.6px;transform:scaleX(0.757);right:455.6px;transform-origin:100% 0;color:#111;">1</div>
<div class="t " style="top:392.41px;font-size:7.6px;transform:scaleX(0.720);left:285.7px;transform-origin:0 0;color:#111;">STCK</div>
<div class="t " style="top:404.21px;font-size:7.6px;transform:scaleX(0.720);left:285.7px;transform-origin:0 0;color:#111;">STCK</div>
<div class="t " style="top:392.41px;font-size:7.6px;transform:scaleX(0.720);left:359.8px;transform-origin:0 0;color:#111;">STCK</div>
<div class="t " style="top:404.21px;font-size:7.6px;transform:scaleX(0.720);left:359.8px;transform-origin:0 0;color:#111;">STCK</div>
<div class="t " style="top:415.91px;font-size:7.6px;transform:scaleX(0.720);left:359.8px;transform-origin:0 0;color:#111;">STCK</div>
<div class="a" style="left:427.5px;top:417.4px;width:150.3px;height:8.8px;background:#f5f4ee;"></div>
<div class="a" style="left:157px;top:429.3px;width:465px;height:1px;background:#9db5de;"></div>
<div class="a" style="left:622px;top:322px;width:1px;height:108px;background:#a9bde0;"></div>
<svg style="left:626px;top:270.3px" width="8" height="7" viewBox="0 0 8 7"><rect x="0.5" y="0.5" width="6.6" height="6" fill="#eeeeea" stroke="#8a8a86" stroke-width="0.9"/><rect x="2.4" y="2.2" width="5.2" height="3" fill="#fff" stroke="#8a8a86" stroke-width="0.7"/></svg>
<svg style="left:627.3px;top:282px" width="5.2" height="5" viewBox="0 0 5.2 5"><rect x="0.3" y="0" width="4.6" height="0.9" fill="#5f87d2" opacity="0.75"/><path d="M0.1 4.6 L2.6 2 L5.1 4.6 Z" fill="#5f87d2"/></svg>
<svg style="left:627.6px;top:292.1px" width="4.6" height="3.8" viewBox="0 0 4.6 3.8"><path d="M2.3 0 L4.6 1.9 L2.3 3.8 L0 1.9 Z" fill="#5f87d2"/></svg>
<svg style="left:627.3px;top:300.8px" width="5.2" height="3" viewBox="0 0 5.2 3"><path d="M0.1 2.8 L2.6 0.2 L5.1 2.8 Z" fill="#5f87d2"/></svg>
<svg style="left:626.4px;top:370.7px" width="7" height="6" viewBox="0 0 7 6"><path d="M1.8 0.3 Q0.2 3 1.8 5.7 M5.2 0.3 Q6.8 3 5.2 5.7" stroke="#5f87d2" stroke-width="0.9" fill="none"/><rect x="3" y="0.6" width="1" height="4.8" fill="#5f87d2"/></svg>
<svg style="left:625.9px;top:382.8px" width="9" height="9" viewBox="0 0 9 9"><circle cx="3.4" cy="3.4" r="2.7" fill="#f3f7fd" stroke="#a9bcdf" stroke-width="0.9"/><path d="M5.6 5.6 L8 8" stroke="#a3b7dd" stroke-width="1.4" stroke-linecap="round"/></svg>
<div class="a" style="left:625.9px;top:393.4px;width:8px;height:0.8px;background:#c9d7f0;"></div>
<svg style="left:625.9px;top:396.5px" width="8" height="7" viewBox="0 0 8 7"><path d="M0.5 6.5 H7.5" stroke="#a3b7dd" stroke-width="0.9"/><path d="M1 5.6 V3 H2.8 V5.6 M3.4 5.6 V4 H4.6 V5.6 M5.2 5.6 V1.5 H7 V5.6" fill="#c3d3ee" stroke="#a3b7dd" stroke-width="0.5"/></svg>
<div class="a" style="left:625.9px;top:406.8px;width:8px;height:0.8px;background:#c9d7f0;"></div>
<svg style="left:625.9px;top:409.4px" width="8" height="8" viewBox="0 0 8 8"><path d="M0.3 0.8 H6.2 L3.8 3.6 V7.4 L2.7 6.5 V3.6 Z" fill="#dfe8f8" stroke="#8fa8d6" stroke-width="0.7"/><rect x="5.2" y="3.6" width="2.3" height="3.8" fill="#c3d3ee" stroke="#a3b7dd" stroke-width="0.5"/></svg>
<div class="a" style="left:625.9px;top:420px;width:8px;height:0.8px;background:#c9d7f0;"></div>
<svg style="left:625.4px;top:422.5px" width="9" height="8" viewBox="0 0 9 8"><rect x="0.5" y="0.5" width="6" height="5" fill="#e4ecf9" stroke="#7f9bd0" stroke-width="0.8"/><rect x="0.5" y="0.5" width="6" height="1.3" fill="#7f9bd0"/><rect x="3" y="3.2" width="5.4" height="4.2" fill="#f8fbff" stroke="#7f9bd0" stroke-width="0.8"/></svg>
<svg style="left:627.3px;top:495.5px" width="5.2" height="3" viewBox="0 0 5.2 3"><path d="M0.1 0.2 L2.6 2.8 L5.1 0.2 Z" fill="#5f87d2"/></svg>
<svg style="left:627.6px;top:504.1px" width="4.6" height="3.8" viewBox="0 0 4.6 3.8"><path d="M2.3 0 L4.6 1.9 L2.3 3.8 L0 1.9 Z" fill="#5f87d2"/></svg>
<svg style="left:627.3px;top:512px" width="5.2" height="5" viewBox="0 0 5.2 5"><rect x="0.3" y="4.1" width="4.6" height="0.9" fill="#5f87d2" opacity="0.75"/><path d="M0.1 0.4 L2.6 3 L5.1 0.4 Z" fill="#5f87d2"/></svg>
</div>
</body>
</html>
